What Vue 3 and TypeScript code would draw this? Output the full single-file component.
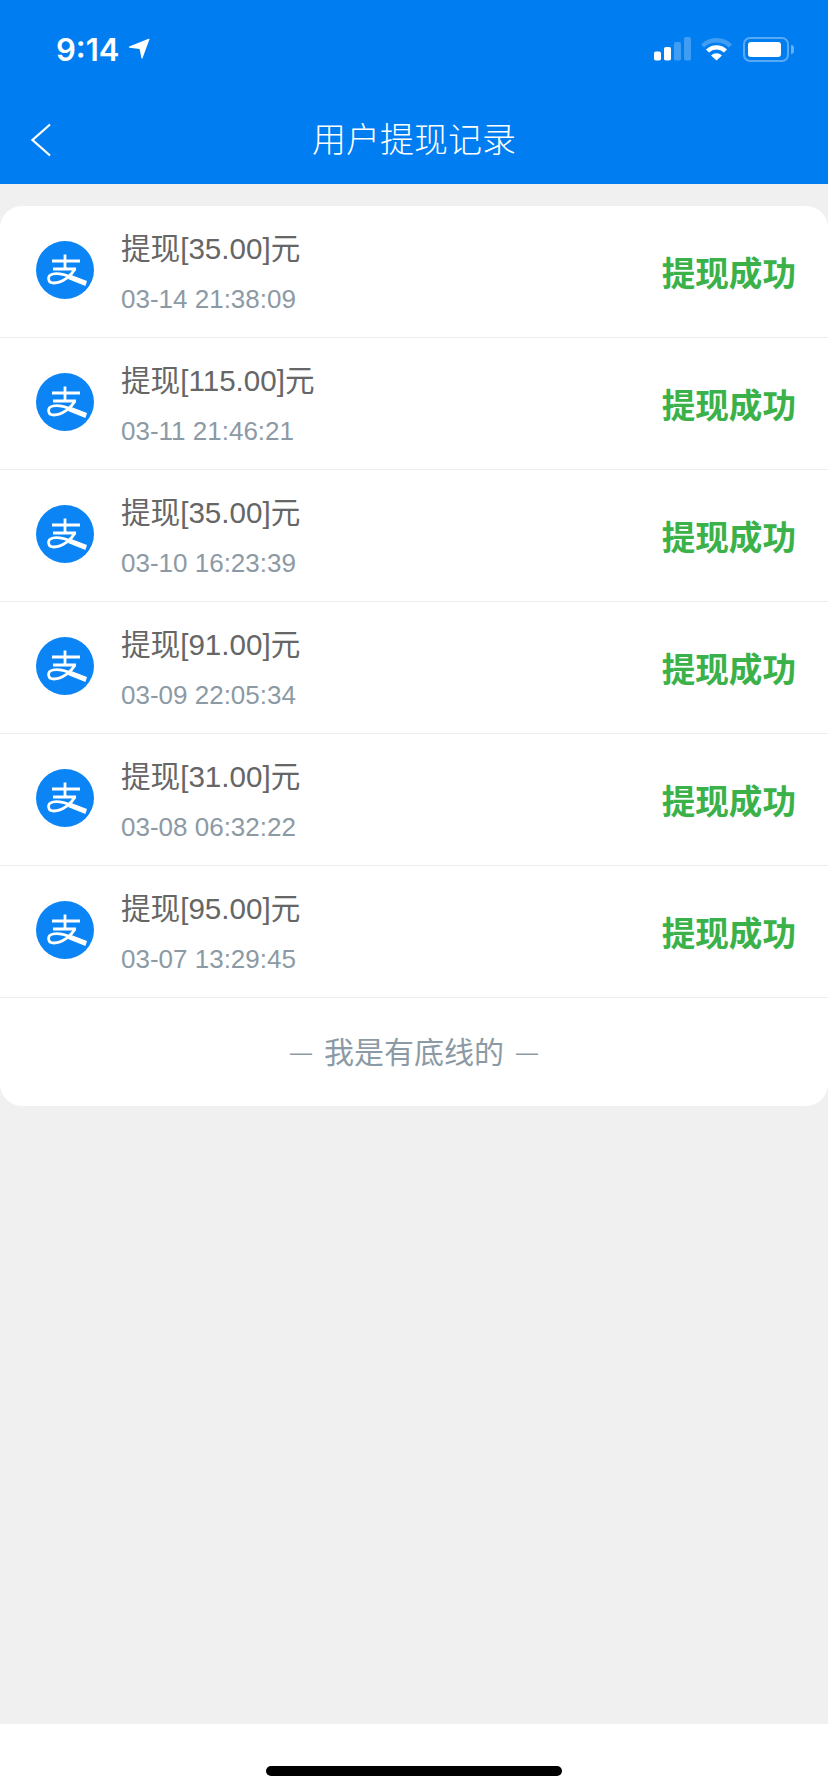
<template>
  <div class="page">
    <header class="head">
      <div class="status">
        <div class="clock">
          <span class="time">9:14</span>
          <svg class="arrow" width="22" height="22" viewBox="0 0 22 22"><path d="M20.6 .8 Q21.8 .4 21.4 1.6 L14.6 20 Q14 21.4 13.4 20 L11.6 11 L1.6 9.8 Q.2 9.4 1.2 8.6 Z" fill="#fff" /></svg>
        </div>
        <div class="indicators">
          <svg width="37" height="24" viewBox="0 0 37 24">
            <rect x="0" y="14.5" width="7" height="9" rx="1.8" fill="#fff" />
            <rect x="10" y="10" width="7" height="13.5" rx="1.8" fill="#fff" />
            <rect x="20" y="5" width="7" height="18.5" rx="1.8" fill="#fff" fill-opacity=".25" />
            <rect x="30" y="0" width="7" height="23.5" rx="1.8" fill="#fff" fill-opacity=".25" />
          </svg>
          <svg class="wifi" width="31" height="24" viewBox="0 0 31 24" fill="none" stroke="#fff" stroke-width="4.4">
            <path d="M1.5 9 A20 20 0 0 1 29.5 9" stroke-opacity=".25" />
            <path d="M6.5 14 A13 13 0 0 1 24.5 14" />
            <path d="M15.5 23.5 L10 18.4 A8 8 0 0 1 21 18.4 Z" fill="#fff" stroke="none" />
          </svg>
          <div class="battery"><div class="level"></div></div>
          <div class="cap"></div>
        </div>
      </div>
      <div class="nav">
        <svg class="back" width="24" height="36" viewBox="0 0 24 36" fill="none"><path d="M21 2.5 L3.5 18 L21 33.5" stroke="#fff" stroke-width="2.3" /></svg>
        <span class="title">用户提现记录</span>
      </div>
    </header>

    <main class="list-wrap">
      <section class="card">
        <div v-for="item in records" :key="item.time" class="row">
          <svg class="alipay" width="58" height="58" viewBox="0 0 58 58">
            <circle cx="29" cy="29" r="29" fill="#0b84f5" />
            <path d="M16 20 H44 M29 13.5 V28 M17 28 H40" stroke="#fff" stroke-width="2.8" fill="none" />
            <path d="M39 28 C35 35 26 42 18 42 C11.5 42 10.5 34.5 17 33 C23 31.8 30 34 37 37" stroke="#fff" stroke-width="2.8" fill="none" />
            <path d="M34 33.6 L51 40 L49.4 45 L32 38 Z" fill="#fff" />
          </svg>
          <div class="info">
            <div class="amount">提现[{{ item.amount }}]元</div>
            <div class="date">{{ item.time }}</div>
          </div>
          <div class="state">提现成功</div>
        </div>
        <div class="end"><span class="dash">—</span>我是有底线的<span class="dash">—</span></div>
      </section>
    </main>

    <footer class="foot"><div class="home-bar"></div></footer>
  </div>
</template>

<script setup lang="ts">
interface WithdrawRecord {
  amount: string;
  time: string;
}

const records: WithdrawRecord[] = [
  { amount: '35.00', time: '03-14 21:38:09' },
  { amount: '115.00', time: '03-11 21:46:21' },
  { amount: '35.00', time: '03-10 16:23:39' },
  { amount: '91.00', time: '03-09 22:05:34' },
  { amount: '31.00', time: '03-08 06:32:22' },
  { amount: '95.00', time: '03-07 13:29:45' },
];
</script>

<style>
html,
body {
  margin: 0;
  background: #f0f0f0;
}
</style>

<style scoped>
.page {
  width: 828px;
  height: 1792px;
  display: flex;
  flex-direction: column;
  background: #f0f0f0;
  font-family: "Liberation Sans", "Noto Sans CJK SC", sans-serif;
}

.head {
  height: 184px;
  background: #007df1;
  color: #fff;
  flex-shrink: 0;
}

.status {
  height: 92px;
  display: flex;
  justify-content: space-between;
  align-items: center;
  padding: 6px 34px 0 56px;
  box-sizing: border-box;
}

.clock {
  display: flex;
  align-items: center;
  gap: 9px;
}

.time {
  font-family: Inter, sans-serif;
  font-size: 31px;
  font-weight: 600;
}

.indicators {
  display: flex;
  align-items: center;
}

.wifi {
  margin-left: 10px;
  margin-right: 11px;
}

.battery {
  width: 46px;
  height: 25px;
  box-sizing: border-box;
  padding: 3px;
  border: 2px solid rgba(255, 255, 255, 0.35);
  border-radius: 7px;
}

.level {
  width: 33px;
  height: 15px;
  background: #fff;
  border-radius: 3px;
}

.cap {
  width: 3px;
  height: 9px;
  margin-left: 2px;
  background: rgba(255, 255, 255, 0.4);
  border-radius: 0 3px 3px 0;
}

.nav {
  position: relative;
  height: 92px;
  display: flex;
  align-items: center;
  justify-content: center;
  padding-bottom: 2px;
  box-sizing: border-box;
}

.back {
  position: absolute;
  left: 29px;
  top: 30px;
}

.title {
  font-size: 34px;
  font-weight: 300;
}

.list-wrap {
  flex: 1;
  padding-top: 22px;
}

.card {
  background: #fff;
  border-radius: 22px;
  overflow: hidden;
}

.row {
  height: 132px;
  box-sizing: border-box;
  display: flex;
  align-items: center;
  padding: 0 32px 0 36px;
  border-bottom: 1px solid #ededed;
}

.alipay {
  flex-shrink: 0;
  margin-right: 27px;
  margin-top: -4px;
}

.info {
  flex: 1;
  padding-top: 6px;
}

.amount {
  font-size: 29.6px;
  line-height: 40px;
  color: #666;
  margin-top: -3px;
}

.date {
  font-size: 26px;
  line-height: 36px;
  margin-top: 12px;
  color: #8c9aa5;
}

.state {
  font-size: 33.6px;
  font-weight: 700;
  color: #3bb14a;
}

.end {
  height: 108px;
  display: flex;
  align-items: center;
  justify-content: center;
  gap: 12px;
  padding-bottom: 4px;
  box-sizing: border-box;
  font-size: 30px;
  color: #8c9aa5;
}

.dash {
  font-family: "Liberation Sans", sans-serif;
  font-size: 22px;
  padding-top: 6px;
}

.foot {
  height: 68px;
  flex-shrink: 0;
  background: #fff;
  display: flex;
  justify-content: center;
  padding-top: 42px;
  box-sizing: border-box;
}

.home-bar {
  width: 296px;
  height: 10px;
  border-radius: 5px;
  background: #000;
}
</style>
